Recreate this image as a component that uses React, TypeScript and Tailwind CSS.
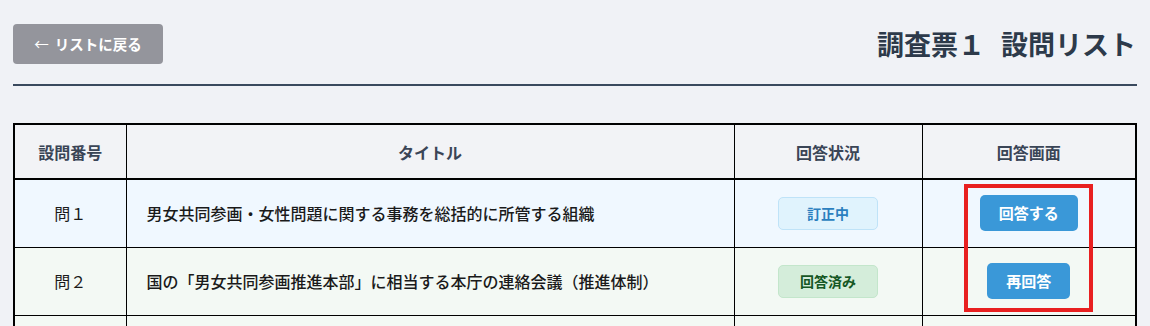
type Row = {
  no: string;
  title: string;
  status: "correcting" | "done";
  action: string;
  bg: string;
};

const rows: Row[] = [
  {
    no: "問１",
    title: "男女共同参画・女性問題に関する事務を総括的に所管する組織",
    status: "correcting",
    action: "回答する",
    bg: "bg-[#f0f8ff]",
  },
  {
    no: "問２",
    title: "国の「男女共同参画推進本部」に相当する本庁の連絡会議（推進体制）",
    status: "done",
    action: "再回答",
    bg: "bg-[#f3f9f4]",
  },
];

const StatusBadge = ({ status }: { status: Row["status"] }) =>
  status === "correcting" ? (
    <span className="inline-flex h-[33px] w-[100px] items-center justify-center rounded-[5px] border border-[#bfe3f8] bg-[#e0f3fd] text-[14px] font-bold text-[#2b7fbf]">
      訂正中
    </span>
  ) : (
    <span className="inline-flex h-[33px] w-[100px] items-center justify-center rounded-[5px] border border-[#c3e6cb] bg-[#d4edda] text-[14px] font-bold text-[#155724]">
      回答済み
    </span>
  );

export default function App() {
  return (
    <div
      className="min-h-screen bg-[#f0f2f6] px-[13px] pt-[24px]"
      style={{ fontFamily: '"Noto Sans CJK JP", "Noto Sans", sans-serif' }}
    >
      <div className="flex h-10 items-center justify-between">
        <button className="flex h-10 w-[150px] items-center justify-center gap-[6px] rounded-[4px] bg-[#94959c] text-[14.5px] font-bold text-white">
          <span className="font-normal">←</span>
          <span>リストに戻る</span>
        </button>
        <h1 className="mr-px flex text-[27px] font-bold text-[#2d3a4a]">
          <span>調査票１</span>
          <span className="ml-4">設問リスト</span>
        </h1>
      </div>

      <div className="mt-5 border-t-2 border-[#3a4a5e]" />

      <div className="relative mt-[37px]">
        <table className="w-full table-fixed border-collapse border-2 border-black">
          <colgroup>
            <col className="w-[112px]" />
            <col className="w-[608px]" />
            <col className="w-[188px]" />
            <col />
          </colgroup>
          <thead>
            <tr className="h-[55px] bg-[#f2f3f6] text-[16px] font-bold text-[#3a4556]">
              <th className="border border-b-2 border-black font-bold">設問番号</th>
              <th className="border border-b-2 border-black font-bold">タイトル</th>
              <th className="border border-b-2 border-black font-bold">回答状況</th>
              <th className="border border-b-2 border-black font-bold">回答画面</th>
            </tr>
          </thead>
          <tbody>
            {rows.map((r) => (
              <tr key={r.no} className={`h-[68px] ${r.bg}`}>
                <td className="border border-black text-center text-[16px] text-[#1a1a1a]">{r.no}</td>
                <td className="border border-black pl-[20px] text-[16px] font-medium text-[#1a1a1a]">
                  {r.title}
                </td>
                <td className="border border-black text-center">
                  <StatusBadge status={r.status} />
                </td>
                <td className="border border-black text-center">
                  <button className="h-9 rounded-[5px] bg-[#3a98d8] px-[19px] text-[15px] font-bold text-white">
                    {r.action}
                  </button>
                </td>
              </tr>
            ))}
            <tr className="h-[68px] bg-[#f3f9f4]">
              <td className="border border-black" />
              <td className="border border-black" />
              <td className="border border-black" />
              <td className="border border-black" />
            </tr>
          </tbody>
        </table>

        {/* annotation frame */}
        <div className="pointer-events-none absolute left-[951px] top-[61px] h-[128px] w-[129px] border-[4px] border-[#e82020]" />
      </div>
    </div>
  );
}
